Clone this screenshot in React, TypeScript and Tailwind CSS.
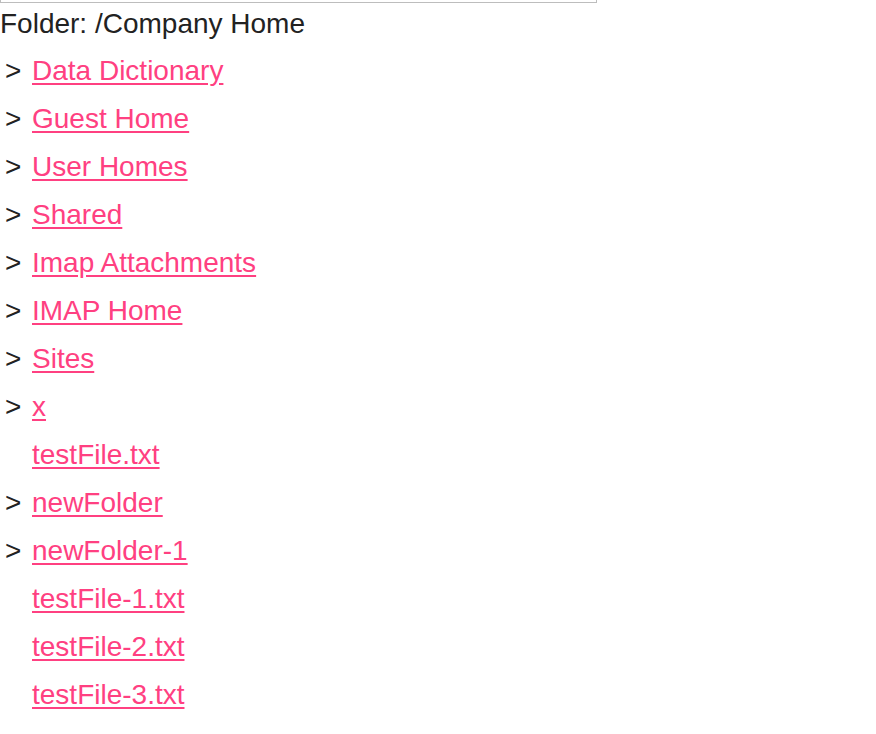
import React from 'react';

type Node = { name: string; folder: boolean };

const nodes: Node[] = [
  { name: 'Data Dictionary', folder: true },
  { name: 'Guest Home', folder: true },
  { name: 'User Homes', folder: true },
  { name: 'Shared', folder: true },
  { name: 'Imap Attachments', folder: true },
  { name: 'IMAP Home', folder: true },
  { name: 'Sites', folder: true },
  { name: 'x', folder: true },
  { name: 'testFile.txt', folder: false },
  { name: 'newFolder', folder: true },
  { name: 'newFolder-1', folder: true },
  { name: 'testFile-1.txt', folder: false },
  { name: 'testFile-2.txt', folder: false },
  { name: 'testFile-3.txt', folder: false },
];

export default function App() {
  return (
    <div className="min-h-[734px] bg-white text-[28px] text-[#222] font-['Liberation_Sans',Arial,sans-serif]">
      {/* path input, scrolled mostly out of view */}
      <div className="w-[597px] h-[3px] border-x border-b border-[#bdbdbd]" />

      <div className="mt-px leading-[40px]">Folder: /Company Home</div>

      <ul className="mt-[3px]">
        {nodes.map((node) => (
          <li key={node.name} className="flex leading-[48px]">
            <span className="w-8 shrink-0 pl-[5px]">{node.folder ? '>' : ''}</span>
            <a href="#" className="text-[#ff4081] underline underline-offset-[3px]">
              {node.name}
            </a>
          </li>
        ))}
      </ul>
    </div>
  );
}
